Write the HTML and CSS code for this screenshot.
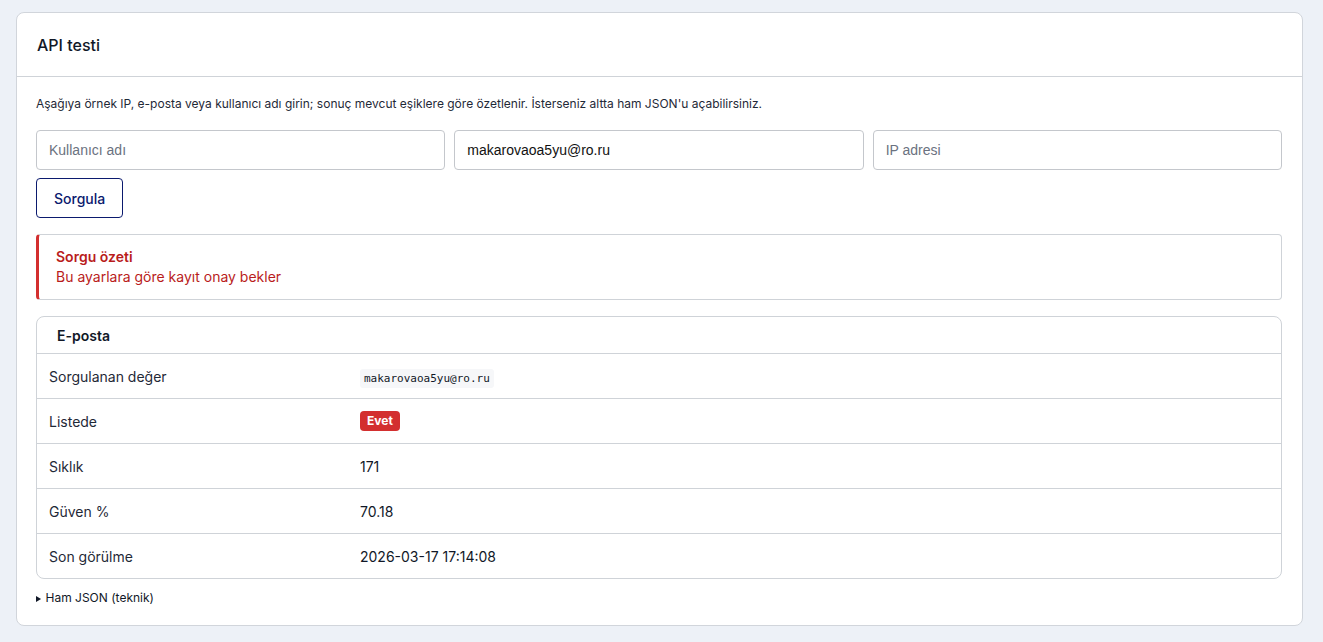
FILE: index.html
```html
<!DOCTYPE html>
<html lang="tr">
<head>
  <meta charset="UTF-8">
  <title>API testi</title>
  <link rel="stylesheet" href="styles.css">
</head>
<body>

  <div class="card">
    <div class="card-header">API testi</div>

    <div class="card-body">
      <p class="intro">Aşağıya örnek IP, e-posta veya kullanıcı adı girin; sonuç mevcut eşiklere göre özetlenir. İsterseniz altta ham JSON'u açabilirsiniz.</p>

      <div class="input-row">
        <input type="text" placeholder="Kullanıcı adı">
        <input type="text" placeholder="E-posta" value="makarovaoa5yu@ro.ru">
        <input type="text" placeholder="IP adresi">
      </div>

      <button class="btn">Sorgula</button>

      <div class="alert">
        <div class="alert-title">Sorgu özeti</div>
        <div>Bu ayarlara göre kayıt onay bekler</div>
      </div>

      <div class="result">
        <div class="result-head">E-posta</div>
        <table>
          <tr>
            <td class="label">Sorgulanan değer</td>
            <td><code>makarovaoa5yu@ro.ru</code></td>
          </tr>
          <tr>
            <td class="label">Listede</td>
            <td><span class="badge">Evet</span></td>
          </tr>
          <tr>
            <td class="label">Sıklık</td>
            <td>171</td>
          </tr>
          <tr>
            <td class="label">Güven %</td>
            <td>70.18</td>
          </tr>
          <tr>
            <td class="label">Son görülme</td>
            <td>2026-03-17 17:14:08</td>
          </tr>
        </table>
      </div>

      <details>
        <summary>Ham JSON (teknik)</summary>
        <pre>{}</pre>
      </details>
    </div>
  </div>

</body>
</html>
```

FILE: styles.css
```css
body {
  font-family: Inter, 'Noto Sans', sans-serif;
  background-color: #edf1f7;
  color: #111827;
  margin: 0;
  padding: 12px 20px 16px 16px;
}
.card {
  background: #fff;
  border: 1px solid #d1d5db;
  border-radius: 8px;
}
.card-header {
  padding: 0 20px;
  height: 63px;
  display: flex;
  align-items: center;
  font-size: 16px;
  font-weight: 500;
  border-bottom: 1px solid #cfd3d8;
}
.card-body {
  padding: 18px 20px 20px 19px;
}
.intro {
  font-size: 12px;
  margin: 0 0 17px;
  line-height: 18px;
  color: #1f2937;
}
.input-row {
  display: flex;
  gap: 9px;
  margin-bottom: 8px;
}
input {
  flex: 1;
  height: 40px;
  box-sizing: border-box;
  padding: 0 12px;
  font-family: 'Liberation Sans', Arial, sans-serif;
  font-size: 14px;
  color: #111;
  border: 1px solid #c4c7cc;
  border-radius: 4px;
}
input::placeholder {
  color: #6b7280;
}
.btn {
  height: 40px;
  padding: 0 17px;
  font-family: Inter, sans-serif;
  font-size: 14px;
  font-weight: 500;
  color: #0b1a6e;
  background: #fff;
  border: 1px solid #0b1a6e;
  border-radius: 4px;
  cursor: pointer;
}
.alert {
  margin-top: 16px;
  border: 1px solid #cfd3d8;
  border-left: 3px solid #d32f2f;
  border-radius: 4px;
  padding: 12px 18px 12px 17px;
  color: #b91c1c;
  font-size: 14px;
  line-height: 20px;
}
.alert-title {
  font-weight: 600;
}
.result {
  margin-top: 16px;
  border: 1px solid #cfd3d8;
  border-radius: 8px;
  overflow: hidden;
}
.result-head {
  padding: 0 20px;
  height: 36px;
  display: flex;
  align-items: center;
  font-weight: 600;
  font-size: 14px;
  border-bottom: 1px solid #cfd3d8;
}
table {
  width: 100%;
  border-collapse: collapse;
  font-size: 14px;
}
td {
  height: 44px;
  padding: 0 12px;
  border-top: 1px solid #cfd3d8;
}
tr:first-child td {
  border-top: none;
}
td.label {
  width: 25%;
  color: #1f2937;
}
code {
  font-family: 'DejaVu Sans Mono', monospace;
  font-size: 11px;
  background: #f6f7f9;
  padding: 3px 4px;
  border-radius: 3px;
}
.badge {
  display: inline-block;
  background: #d32f2f;
  color: #fff;
  font-size: 12px;
  font-weight: 700;
  padding: 2px 7px;
  border-radius: 4px;
  line-height: 16px;
}
details {
  margin-top: 11px;
  font-size: 12px;
}
summary {
  cursor: pointer;
}
summary::marker {
  font-size: 9px;
}
```
